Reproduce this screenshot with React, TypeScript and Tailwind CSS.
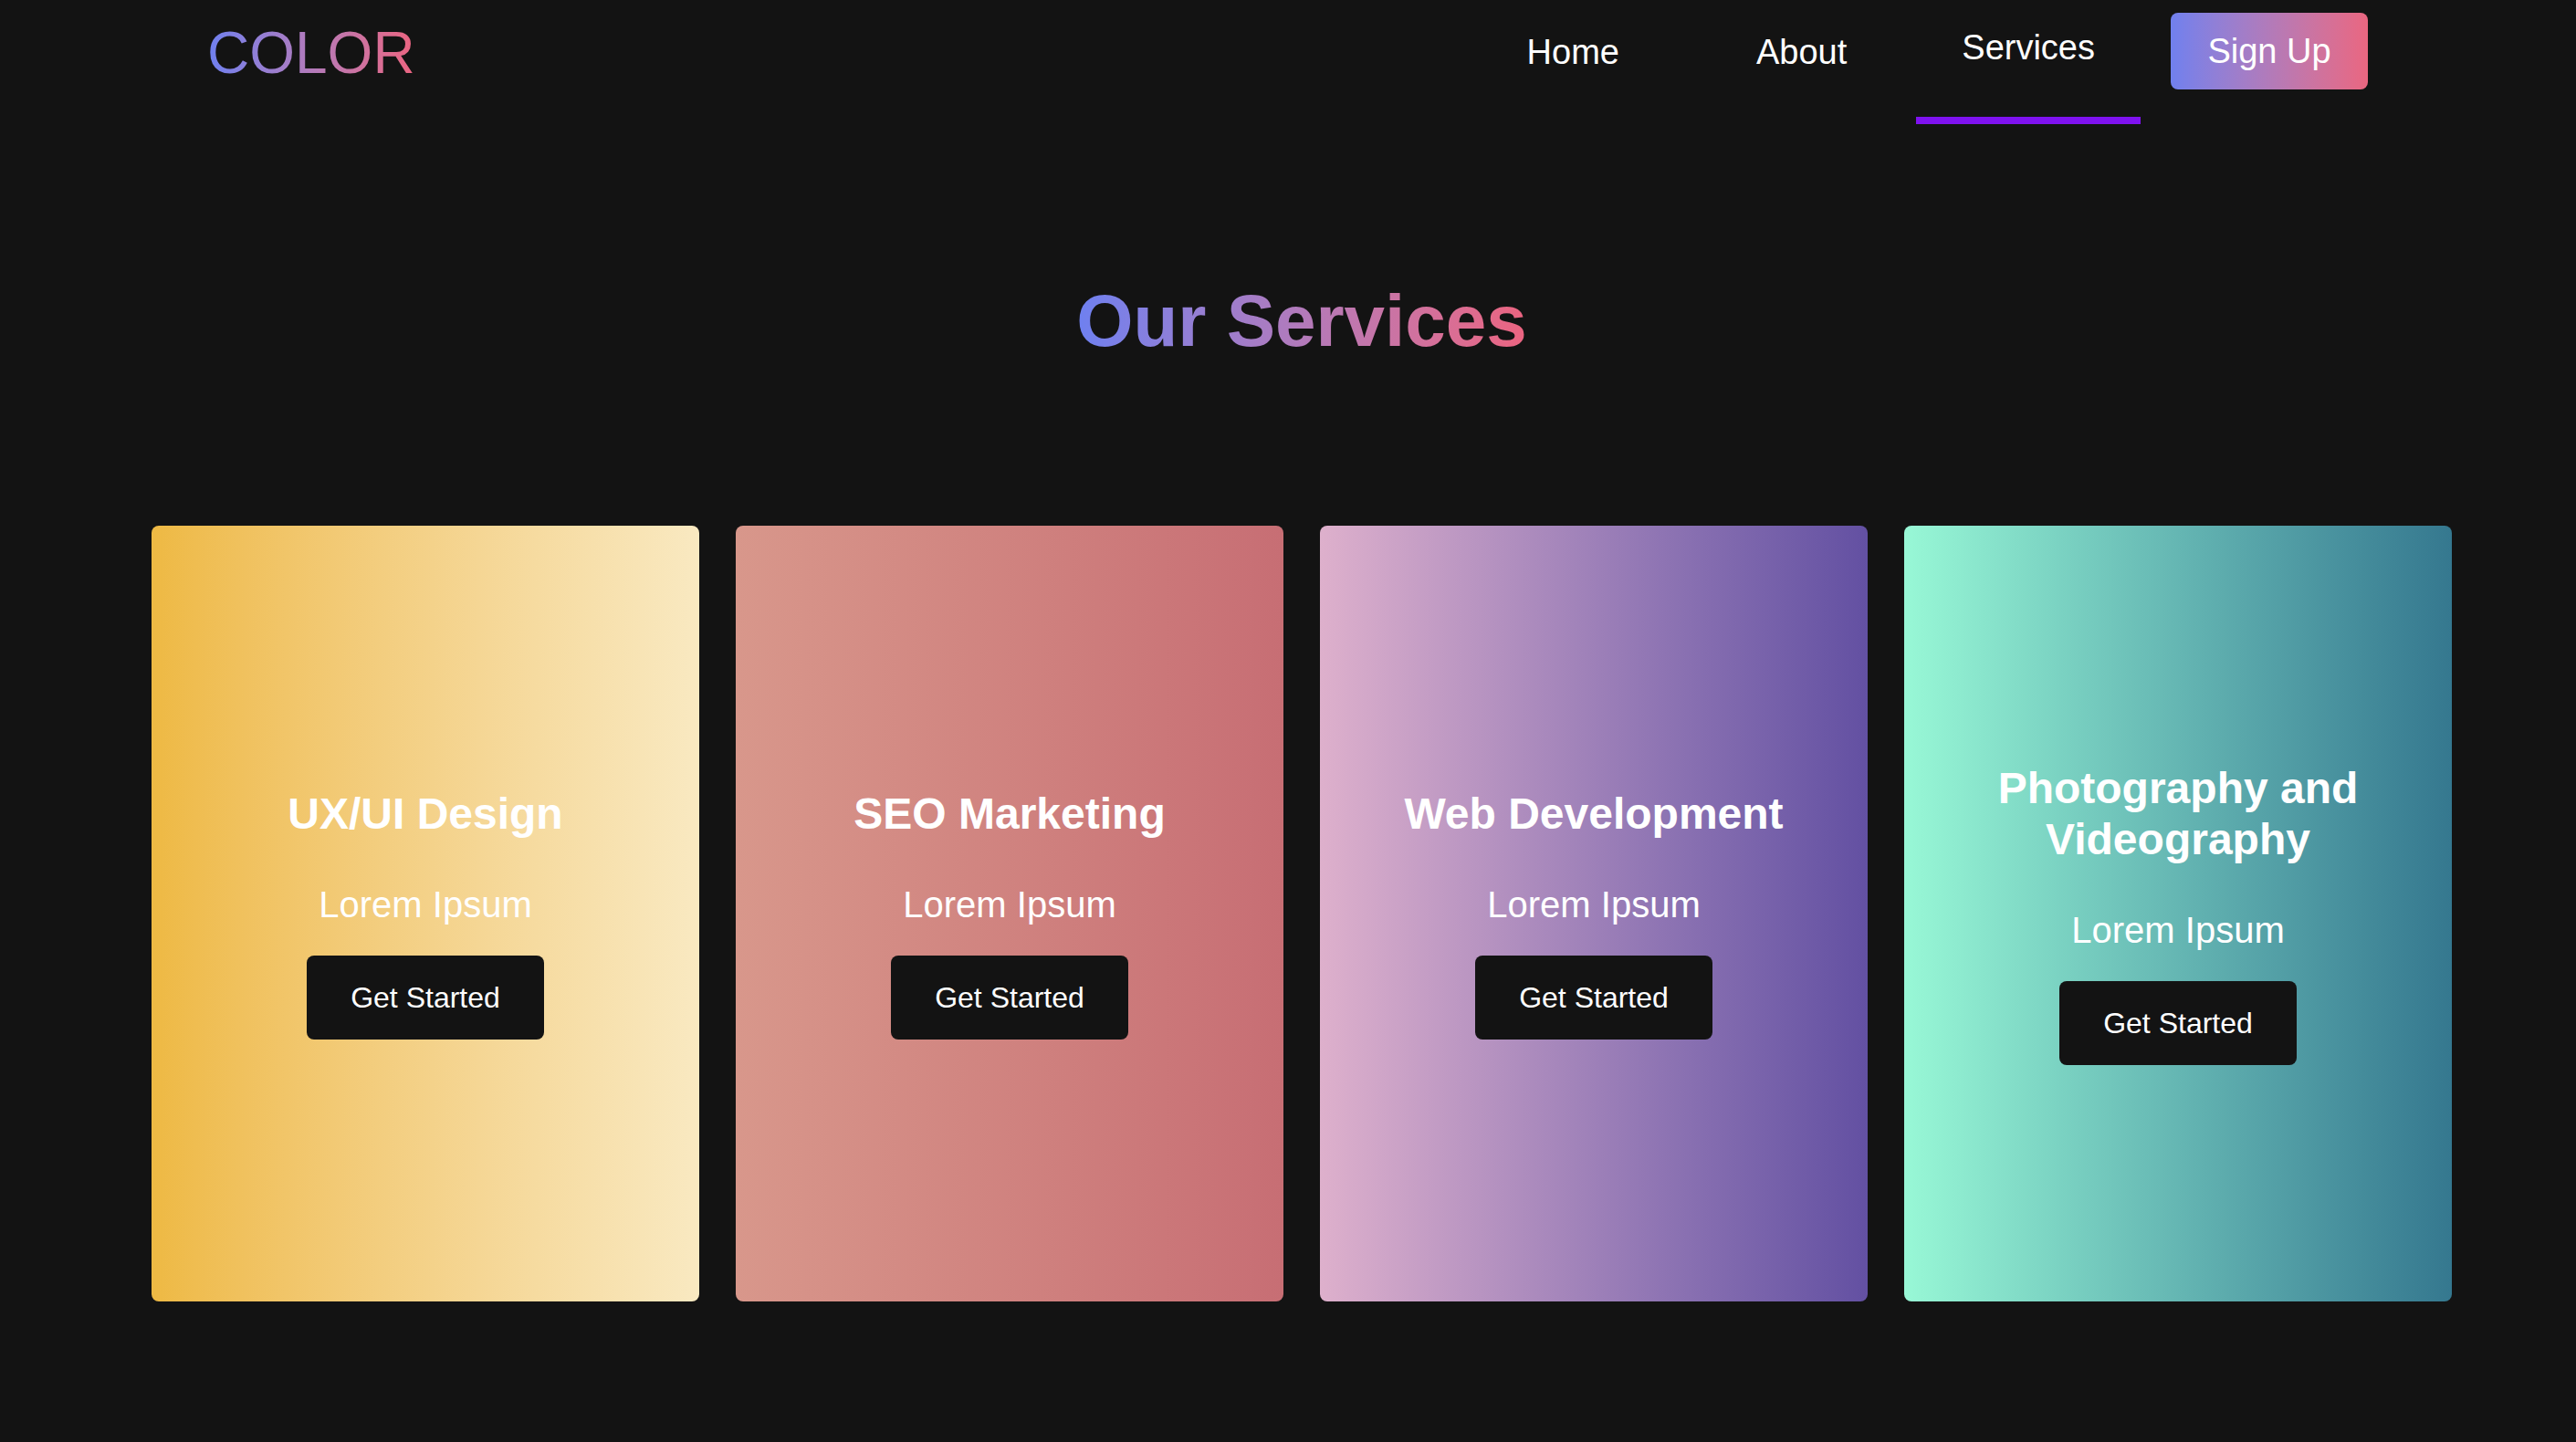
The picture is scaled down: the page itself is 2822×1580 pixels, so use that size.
import React from 'react'

interface Service {
  title: string
  gradient: string
}

const services: Service[] = [
  { title: 'UX/UI Design', gradient: 'bg-linear-to-r from-[#eeb943] to-[#f9e9c1]' },
  { title: 'SEO Marketing', gradient: 'bg-linear-to-r from-[#d8978b] to-[#c76e74]' },
  { title: 'Web Development', gradient: 'bg-linear-to-r from-[#deb0cc] to-[#6350a2]' },
  { title: 'Photography and Videography', gradient: 'bg-linear-to-r from-[#98f8d6] to-[#35788f]' },
]

function ServiceCard({ service }: { service: Service }) {
  return (
    <div
      className={`w-[600px] h-[850px] rounded-lg flex flex-col items-center justify-center text-center text-white ${service.gradient}`}
    >
      <h2 className="text-[48px] leading-[56px] font-bold mb-[48px] px-[40px]">{service.title}</h2>
      <p className="text-[40px] leading-[46px] mb-[33px]">Lorem Ipsum</p>
      <button className="w-[260px] h-[92px] rounded-lg bg-[#131313] text-white text-[32px] leading-none">
        Get Started
      </button>
    </div>
  )
}

export default function App() {
  return (
    <div className="min-h-screen bg-[#131313] font-['Liberation_Sans',Arial,sans-serif] text-white">
      <header className="flex items-start justify-between pl-[227px] pr-[228px] h-[136px]">
        <div className="mt-[21px] w-fit text-[64px] leading-[74px] bg-linear-to-r from-[#6e80f0] to-[#ec6480] bg-clip-text text-transparent">
          COLOR
        </div>
        <nav className="flex items-start">
          <a className="block px-[50px] pt-[35px] text-[38px] leading-[44px]">Home</a>
          <a className="block ml-[50px] px-[50px] pt-[35px] text-[38px] leading-[44px]">About</a>
          <a className="block ml-[26px] px-[50px] pt-[30px] pb-[54px] text-[38px] leading-[44px] border-b-[8px] border-[#7f12f0]">
            Services
          </a>
          <a className="ml-[33px] mt-[14px] w-[216px] h-[84px] rounded-lg flex items-center justify-center text-[38px] leading-[44px] bg-linear-to-r from-[#7080ee] to-[#ea6680]">
            Sign Up
          </a>
        </nav>
      </header>

      <section className="flex flex-col">
        <h1 className="self-center ml-[30px] mt-[170px] w-fit text-[80px] leading-[92px] font-bold bg-linear-to-r from-[#6e80f0] to-[#ec6480] bg-clip-text text-transparent">
          Our Services
        </h1>
        <div className="flex gap-[40px] pl-[166px] mt-[178px]">
          {services.map((s) => (
            <ServiceCard key={s.title} service={s} />
          ))}
        </div>
      </section>
    </div>
  )
}
